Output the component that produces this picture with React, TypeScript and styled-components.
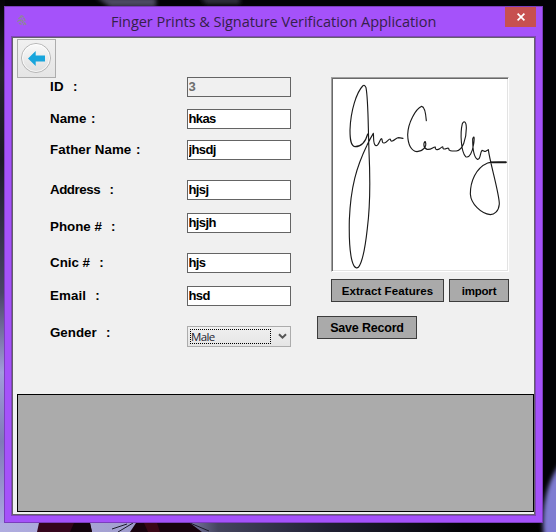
import React from "react";
import styled, { createGlobalStyle } from "styled-components";

const GlobalStyle = createGlobalStyle`
  * { box-sizing: border-box; }
  html, body { margin: 0; padding: 0; background: #000; overflow: hidden; }
  button, input { border-radius: 0; outline: none; }
`;

const Desktop = styled.div`
  position: relative;
  width: 556px;
  height: 532px;
  padding: 6px 0 0 4px;
  overflow: hidden;
  background: #020205;
`;

const Wallpaper = styled.svg`
  position: absolute;
  inset: 0;
`;

const Window = styled.main`
  position: relative;
  width: 539px;
  height: 517px;
  display: flex;
  flex-direction: column;
  background: #a552fa;
  border: 1px solid #7b3ebd;
  padding: 0 6px 6px;
`;

const TitleBar = styled.header`
  height: 29px;
  display: flex;
  align-items: flex-start;
`;

const AppIcon = styled.svg`
  margin: 8px 0 0 5px;
  flex: none;
`;

const Title = styled.h1`
  flex: 1;
  margin: 4px 0 0 83px;
  font: 400 14.5px/21px "Open Sans", "Noto Sans", sans-serif;
  letter-spacing: -0.04px;
  color: #35204b;
  white-space: pre;
`;

const CloseButton = styled.button`
  width: 31px;
  height: 20px;
  padding: 0;
  border: 0;
  background: #c75050;
  display: flex;
  align-items: center;
  justify-content: center;
`;

const Client = styled.section`
  flex: 1;
  display: flex;
  flex-direction: column;
  background: #f0f0f0;
  border: 1px solid #7f45b8;
  box-shadow: inset 0 0 0 1px #66606c;
  padding: 1px;
`;

const Toolbar = styled.nav`
  height: 39px;
  padding: 1px 0 0 4px;
`;

const BackButton = styled.button`
  width: 39px;
  height: 39px;
  padding: 0;
  border: 1px solid #adadad;
  background: linear-gradient(#f0f0f0, #e5e5e5);
  display: block;
`;

const Body = styled.div`
  height: 317px;
  display: flex;
  align-items: flex-start;
`;

const Form = styled.form`
  width: 278px;
  padding-left: 37px;
`;

const Row = styled.label<{ $gap?: number }>`
  display: flex;
  height: 20px;
  margin-top: ${(p) => p.$gap ?? 0}px;
`;

const LabelText = styled.span<{ $drop?: number; $track?: number }>`
  width: 137px;
  margin-top: ${(p) => p.$drop ?? 0}px;
  font: 700 13.33px/20px "Liberation Sans", Arial, sans-serif;
  letter-spacing: ${(p) => p.$track ?? 0}px;
  color: #000;
  white-space: pre;
`;

const Colon = styled.span`
  letter-spacing: 0.9px;
`;

const TextBox = styled.input`
  width: 104px;
  height: 20px;
  padding: 0 1px 2px 0.5px;
  border: 1px solid #646464;
  background: #fff;
  color: #000;
  font: 700 13px/16px "Liberation Sans", Arial, sans-serif;
  letter-spacing: -0.6px;
  &:disabled {
    background: #f0f0f0;
    color: #6d6d6d;
  }
`;

const Select = styled.div`
  width: 104px;
  height: 21px;
  padding: 2px 3px 2px 2px;
  border: 1px solid #acacac;
  background: linear-gradient(#f0f0f0, #e5e5e5);
  display: flex;
  align-items: center;
  justify-content: space-between;
`;

const SelectValue = styled.span`
  width: 81px;
  height: 15px;
  border: 1px dotted #000;
  font: 400 11.5px/14px "Open Sans", "Noto Sans", sans-serif;
  letter-spacing: -0.65px;
  color: #1c1c30;
`;

const Side = styled.aside`
  width: 218px;
  padding-left: 26px;
  display: flex;
  flex-direction: column;
  align-items: flex-end;
`;

const SignatureBox = styled.figure`
  width: 178px;
  height: 195px;
  margin: 0;
  border: 1px solid;
  border-color: #a0a0a0 #fff #fff #a0a0a0;
  background: #fff;
  box-shadow: inset 1px 1px 0 #696969, inset -1px -1px 0 #e3e3e3;
  padding: 1px;
`;

const Signature = styled.svg`
  display: block;
`;

const ButtonPair = styled.div`
  display: flex;
  gap: 5px;
  margin-top: 7px;
`;

const Button = styled.button<{ $w: number; $size?: number; $track?: number }>`
  width: ${(p) => p.$w}px;
  height: 23px;
  padding: 1px 0 0;
  border: 1px solid #3c3c3c;
  background: #aaa;
  color: #000;
  font: 700 ${(p) => p.$size ?? 12}px/20px "Liberation Sans", Arial, sans-serif;
  letter-spacing: ${(p) => p.$track ?? 0}px;
  white-space: nowrap;
`;

const SaveRow = styled.div`
  align-self: flex-start;
  margin-top: 14px;
`;

const DataGrid = styled.div`
  height: 118px;
  margin-left: 4px;
  border: 1px solid #000;
  background: #ababab;
`;

const fields = [
  { name: "ID", colon: "  :", value: "3", gap: 0, track: 0.2, disabled: true },
  { name: "Name", colon: " :", value: "hkas", gap: 12, track: 0 },
  { name: "Father Name", colon: " :", value: "jhsdj", gap: 11, track: 0.05 },
  { name: "Address", colon: "  :", value: "hjsj", gap: 20, track: -0.45 },
  { name: "Phone #", colon: "  :", value: "hjsjh", gap: 13, track: 0, drop: 4 },
  { name: "Cnic #", colon: "  :", value: "hjs", gap: 20, track: 0 },
  { name: "Email", colon: "  :", value: "hsd", gap: 13, track: 0.1 },
];

export default function App() {
  return (
    <>
      <GlobalStyle />
      <Desktop>
        <Wallpaper width="556" height="532" viewBox="0 0 556 532">
          <defs>
            <filter id="soft" x="-20%" y="-20%" width="140%" height="140%">
              <feGaussianBlur stdDeviation="2" />
            </filter>
            <linearGradient id="side" x1="0" y1="0" x2="0" y2="1">
              <stop offset="0" stopColor="#050508" />
              <stop offset=".14" stopColor="#25242b" />
              <stop offset=".3" stopColor="#1b1a26" />
              <stop offset=".55" stopColor="#4a4568" />
              <stop offset=".7" stopColor="#a19ddc" />
              <stop offset=".83" stopColor="#7f7ab8" />
              <stop offset="1" stopColor="#b0ace6" />
            </linearGradient>
            <linearGradient id="floor" x1="0" y1="0" x2="1" y2="0">
              <stop offset="0" stopColor="#b0ade0" />
              <stop offset=".22" stopColor="#a3a0d0" />
              <stop offset=".34" stopColor="#8280ac" />
              <stop offset=".4" stopColor="#44445e" />
              <stop offset=".6" stopColor="#202033" />
              <stop offset=".85" stopColor="#030306" />
              <stop offset="1" stopColor="#000" />
            </linearGradient>
          </defs>
          <rect width="556" height="532" fill="#020205" />
          <g filter="url(#soft)">
            <path d="M96 -3H156V7H110Z" fill="#4b4a60" />
            <path d="M200 -3H240V4H206Z" fill="#30303c" />
          </g>
          <rect width="5" height="532" fill="url(#side)" />
          <rect y="523" width="545" height="9" fill="url(#floor)" />
          <path d="M39 523H90L92 532H37Z" fill="#35051c" />
          <path d="M74 523H90L92 532H70Z" fill="#12030c" />
          <path d="M136 523H190L202 532H130Z" fill="#18030e" />
          <path d="M144 523H157L160 532H148Z" fill="#3a0716" />
          <path d="M112 529L127 524M118 532L133 523M190 523L209 531" stroke="#1c1b2b" fill="none" />
          <ellipse cx="588" cy="522" rx="45" ry="74" fill="#7f7bd2" filter="url(#soft)" />
        </Wallpaper>
        <Window>
          <TitleBar>
            <AppIcon width="12" height="12" viewBox="0 0 12 12" fill="none" stroke="#8b8c8e" strokeWidth="1.1">
              <path d="M4 1.5Q6 0 7.500 2M2.500 4Q4 1.500 6 3M7 3Q9 3 9 6M1.500 7Q2 5 4.500 5.500M6 5Q8 6 6 8M3 9Q5 7 5 10M7 10Q9 9 8 7M5 4V7M9 8L10 10" />
            </AppIcon>
            <Title>Finger Prints &amp; Signature Verification Application</Title>
            <CloseButton aria-label="Close">
              <svg width="8" height="8" viewBox="0 0 8 8" stroke="#fff" strokeWidth="1.7">
                <path d="M.6.6 7.400 7.400M7.400.6.6 7.400" />
              </svg>
            </CloseButton>
          </TitleBar>
          <Client>
            <Toolbar>
              <BackButton aria-label="Back">
                <svg width="37" height="37" viewBox="0 0 37 37">
                  <defs>
                    <linearGradient id="disc" x1="0" y1="0" x2="0" y2="1">
                      <stop offset="0" stopColor="#fafafa" />
                      <stop offset="1" stopColor="#dedede" />
                    </linearGradient>
                  </defs>
                  <circle cx="18" cy="18" r="14.500" fill="url(#disc)" stroke="#b5b5b5" />
                  <circle cx="18" cy="18" r="13.500" fill="none" stroke="#fff" strokeOpacity=".7" />
                  <path d="M10 18.500 17.700 11V15.600H27V21.400H17.700V26Z" fill="#18a5dc" />
                </svg>
              </BackButton>
            </Toolbar>
            <Body>
              <Form>
                {fields.map((f) => (
                  <Row key={f.name} $gap={f.gap}>
                    <LabelText $drop={f.drop} $track={f.track}>
                      {f.name}
                      <Colon>{f.colon}</Colon>
                    </LabelText>
                    <TextBox defaultValue={f.value} disabled={f.disabled} />
                  </Row>
                ))}
                <Row as="div" $gap={20}>
                  <LabelText $drop={-3}>
                    Gender<Colon>{"  :"}</Colon>
                  </LabelText>
                  <Select>
                    <SelectValue>Male</SelectValue>
                    <svg width="9" height="7" viewBox="0 0 9 7" fill="none" stroke="#555" strokeWidth="2">
                      <path d="M1 1.200 4.500 4.700 8 1.200" />
                    </svg>
                  </Select>
                </Row>
              </Form>
              <Side>
                <SignatureBox>
                  <Signature
                    width="174"
                    height="191"
                    viewBox="24 27 522 573"
                    fill="none"
                    stroke="#1a1a1a"
                    strokeWidth="3.400"
                    strokeLinecap="round"
                    strokeLinejoin="round"
                  >
                    <path d="M128 192C121 218 107 230 90 230C77 228 75 208 75 180C77 120 95 67 113 48Q119 42 123 53C130 90 129 160 132 245C136 330 134 420 127 475C121 530 112 578 100 592Q93 597 86 586C73 560 72 500 73 450C77 350 95 290 126 226C134 208 140 198 145 190C147 203 143 224 153 227C162 228 164 206 170 206C173 207 169 220 178 219C186 218 190 207 195 207C198 208 195 215 202 213C210 210 214 203 221 203L234 205" />
                    <path d="M304 152C302 126 299 110 290 109C272 117 249 158 248 194C249 224 258 242 276 245C293 244 307 230 301 215C295 215 294 235 306 238C320 240 324 230 331 231C329 239 337 241 344 236C354 229 354 228 354 235C360 242 367 231 371 235C370 244 382 243 394 243C413 241 424 207 424 175C424 154 417 151 412 161C405 190 408 246 422 260C434 266 442 246 446 222C449 200 447 196 443 207C443 234 446 261 457 268C468 270 464 249 471 241C475 241 479 246 482 244L490 239C494 275 523 370 523 402C521 425 507 434 496 434C468 431 438 402 436 372C436 335 452 294 488 279C500 275 520 277 543 276" />
                    <path d="M498 277H543" strokeWidth="5" />
                  </Signature>
                </SignatureBox>
                <ButtonPair>
                  <Button $w={113} $size={11.5} $track={0.1}>Extract Features</Button>
                  <Button $w={60} $size={11.5} $track={-0.2}>import</Button>
                </ButtonPair>
                <SaveRow>
                  <Button $w={100} $size={12.5} $track={-0.2}>Save Record</Button>
                </SaveRow>
              </Side>
            </Body>
            <DataGrid />
          </Client>
        </Window>
      </Desktop>
    </>
  );
}
